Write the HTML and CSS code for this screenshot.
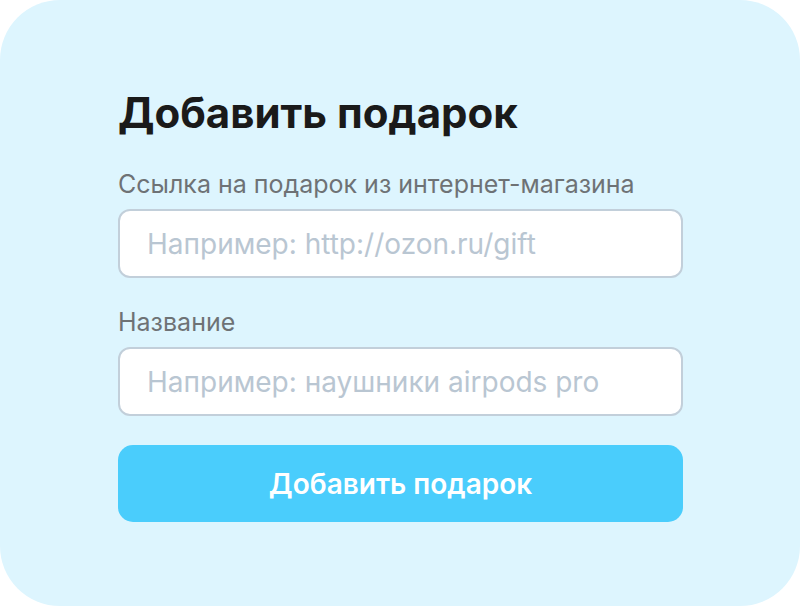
FILE: index.html
```html
<!DOCTYPE html>
<html lang="ru">
<head>
<meta charset="utf-8">
<link rel="stylesheet" href="styles.css">
</head>
<body>
<div class="card">
  <h1 class="title">Добавить подарок</h1>
  <form class="form">
    <label class="field">
      <span class="label">Ссылка на подарок из интернет-магазина</span>
      <input class="input" type="text" placeholder="Например: http://ozon.ru/gift">
    </label>
    <label class="field">
      <span class="label">Название</span>
      <input class="input" type="text" placeholder="Например: наушники airpods pro">
    </label>
    <button class="button" type="button">Добавить подарок</button>
  </form>
</div>
</body>
</html>
```
FILE: styles.css
```css
html, body {
  margin: 0;
  padding: 0;
  background: #ffffff;
}
body {
  font-family: Inter, "Noto Sans", sans-serif;
  width: 800px;
  height: 606px;
}
.card {
  box-sizing: border-box;
  width: 800px;
  height: 606px;
  background: #ddf5fe;
  border-radius: 60px;
  padding: 88px 117px 0 118px;
}
.title {
  margin: 0;
  font-size: 42px;
  font-weight: 700;
  line-height: 50px;
  color: #1a1a1a;
  letter-spacing: 0;
}
.form {
  display: flex;
  flex-direction: column;
  margin-top: 31px;
}
.field {
  display: flex;
  flex-direction: column;
  gap: 10px;
  margin-bottom: 29px;
}
.label {
  font-size: 25px;
  line-height: 30px;
  color: #6e7275;
}
.input {
  box-sizing: border-box;
  height: 69px;
  border: 2px solid #c2cfda;
  border-radius: 12px;
  background: #fff;
  padding: 0 27px;
  font-family: inherit;
  font-size: 28px;
  color: #1a1a1a;
  outline: none;
}
.input::placeholder {
  color: #b9c6d2;
}
.button {
  height: 77px;
  border: none;
  border-radius: 15px;
  background: #4acdfc;
  color: #fff;
  font-family: inherit;
  font-size: 28px;
  font-weight: 600;
}
```
